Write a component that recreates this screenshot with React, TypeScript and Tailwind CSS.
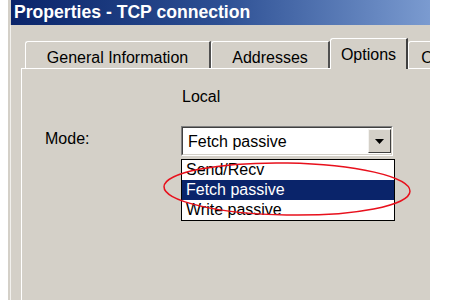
const ITEMS = ["Send/Recv", "Fetch passive", "Write passive"];

function Tab({ label, width, selected }: { label: string; width: string; selected?: boolean }) {
  return (
    <div
      className={
        selected
          ? `relative z-10 -mb-px flex h-[31px] shrink-0 justify-center rounded-tl-[3px] border-l border-t border-r-2 border-l-white border-t-white border-r-[#404040] bg-[#d4d0c8] pt-[6px] ${width}`
          : `flex h-[27px] shrink-0 justify-center rounded-tl-[3px] border-l border-t border-r-2 border-l-white border-t-white border-r-[#505050] bg-[#d4d0c8] pt-[6px] ${width}`
      }
    >
      <span className="leading-[19px] whitespace-nowrap">{label}</span>
    </div>
  );
}

export default function App() {
  return (
    <div className="flex h-[300px] w-[453px] overflow-hidden bg-white font-['Liberation_Sans',Arial,sans-serif] text-[16px] text-black">
      {/* Window */}
      <div className="ml-[8px] flex h-full w-[422px] flex-col overflow-hidden bg-[#d4d0c8]">
        <div className="ml-[3px] flex h-[25px] shrink-0 items-center bg-gradient-to-r from-[#0a246a] via-[#2d4f93] to-[#7b9bd0] pl-[3px]">
          <span className="text-[17.6px] font-bold leading-none whitespace-nowrap text-white">
            Properties - TCP connection
          </span>
        </div>

        <div className="ml-[2px] flex flex-1 flex-col border-l border-[#f2f1ee] pl-[10px] pt-[13px]">
          {/* Tabs */}
          <div className="flex h-[30px] items-end pl-[4px]">
            <Tab label="General Information" width="w-[186px]" />
            <Tab label="Addresses" width="w-[119px]" />
            <Tab label="Options" width="w-[78px]" selected />
            <Tab label="O" width="w-[40px]" />
          </div>

          {/* Panel */}
          <div className="relative flex-1 border-l border-t border-white pt-[18px]">
            <div className="pl-[160px] leading-[19px]">Local</div>

            <div className="mt-[20px] flex">
              <div className="w-[159px] shrink-0 pl-[23px] pt-[3px] leading-[19px]">Mode:</div>

              <div className="flex w-[214px] flex-col">
                {/* Combobox */}
                <div className="h-[30px] w-[212px] border border-b-white border-l-[#808080] border-r-white border-t-[#808080]">
                  <div className="flex h-full items-center border border-b-[#d4d0c8] border-l-[#404040] border-r-[#d4d0c8] border-t-[#404040] bg-white">
                    <span className="flex-1 pl-[5px] leading-[19px]">Fetch passive</span>
                    <div className="flex h-[24px] w-[23px] items-center justify-center border border-b-[#404040] border-l-[#f4f3f0] border-r-[#404040] border-t-[#f4f3f0] bg-[#d4d0c8]">
                      <svg width="9" height="5" viewBox="0 0 9 5">
                        <path d="M0 0h9L4.5 5z" fill="#000" />
                      </svg>
                    </div>
                  </div>
                </div>

                {/* Dropdown list */}
                <div className="mt-[3px] w-[214px] border border-black bg-white">
                  {ITEMS.map((item, i) => (
                    <div
                      key={item}
                      className={
                        i === 1
                          ? "h-[20px] bg-[#0a246a] pl-[4px] leading-[20px] text-white"
                          : "h-[20px] pl-[4px] leading-[20px]"
                      }
                    >
                      {item}
                    </div>
                  ))}
                </div>
              </div>
            </div>

            {/* Red annotation ellipse */}
            <svg
              className="pointer-events-none absolute left-[140px] top-[90px]"
              width="270"
              height="62"
              viewBox="0 0 270 62"
            >
              <ellipse
                cx="125"
                cy="30"
                rx="123"
                ry="26"
                fill="none"
                stroke="#e8101c"
                strokeWidth="1.5"
                transform="rotate(1 125 30)"
              />
            </svg>
          </div>
        </div>
      </div>
    </div>
  );
}
